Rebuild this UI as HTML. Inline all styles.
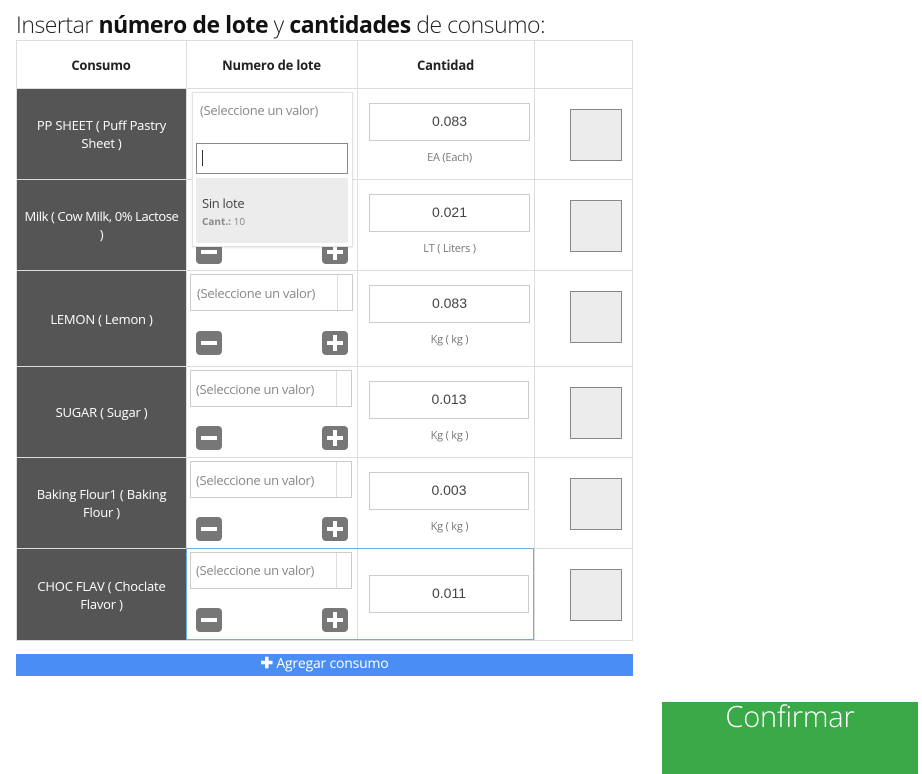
<!DOCTYPE html><html><head><meta charset="utf-8"><style>
*{box-sizing:border-box;margin:0;padding:0}
body{width:922px;height:774px;background:#fff;font-family:"Open Sans","Liberation Sans",sans-serif;position:relative;overflow:hidden;color:#333}
.a{position:absolute}
h1{position:absolute;left:16px;top:8px;font-size:23px;font-weight:300;color:#222;letter-spacing:-0.45px}
h1 b{font-weight:700;color:#111}
.hl{background:#ddd}
.th{font-size:13px;font-weight:700;color:#222;text-align:center;letter-spacing:-0.2px}
.name{background:#555;color:#fff;font-size:13px;text-align:center;display:flex;align-items:center;justify-content:center;padding:0 5px;line-height:18px;letter-spacing:-0.2px}
.sel{border:1px solid #ccc;background:#fff;font-size:13px;color:#888;padding:10px 6px;letter-spacing:-0.3px}
.sel:after{content:"";position:absolute;right:14px;top:0;bottom:0;border-left:1px solid #ddd}
.q{border:1px solid #ccc;background:#fff;font-size:14px;color:#444;text-align:center;line-height:34px;font-family:"Liberation Sans",sans-serif}
.u{font-size:11px;color:#777;text-align:center;width:161px;letter-spacing:-0.2px}
.cb{width:52px;height:52px;border:1px solid #888;background:#ececec}
.btn{width:26px;height:24px;background:#777;border-radius:4px}
.btn:before{content:"";position:absolute;left:5px;top:10px;width:16px;height:4px;background:#fff}
.pl:after{content:"";position:absolute;left:11px;top:4px;width:4px;height:16px;background:#fff}
</style></head><body>
<h1>Insertar <b>número de lote</b> y <b>cantidades</b> de consumo:</h1>
<div class="a" style="left:16px;top:40px;width:617px;height:601px;border:1px solid #ddd"></div>
<div class="a hl" style="left:186px;top:40px;width:1px;height:600px"></div>
<div class="a hl" style="left:357px;top:40px;width:1px;height:600px"></div>
<div class="a hl" style="left:534px;top:40px;width:1px;height:600px"></div>
<div class="a hl" style="left:16px;top:88px;width:617px;height:1px"></div>
<div class="a hl" style="left:16px;top:179px;width:617px;height:1px"></div>
<div class="a hl" style="left:16px;top:270px;width:617px;height:1px"></div>
<div class="a hl" style="left:16px;top:366px;width:617px;height:1px"></div>
<div class="a hl" style="left:16px;top:457px;width:617px;height:1px"></div>
<div class="a hl" style="left:16px;top:548px;width:617px;height:1px"></div>
<div class="a th" style="left:16px;top:56px;width:170px">Consumo</div>
<div class="a th" style="left:186px;top:56px;width:171px">Numero de lote</div>
<div class="a th" style="left:357px;top:56px;width:177px">Cantidad</div>

<div class="a name" style="left:17px;top:89px;width:169px;height:90px">PP SHEET ( Puff Pastry Sheet )</div>
<div class="a name" style="left:17px;top:180px;width:169px;height:90px;padding:0 1px;letter-spacing:-0.4px">Milk ( Cow Milk, 0% Lactose<br>)</div>
<div class="a name" style="left:17px;top:271px;width:169px;height:95px">LEMON ( Lemon )</div>
<div class="a name" style="left:17px;top:367px;width:169px;height:90px">SUGAR ( Sugar )</div>
<div class="a name" style="left:17px;top:458px;width:169px;height:90px">Baking Flour1 ( Baking Flour )</div>
<div class="a name" style="left:17px;top:549px;width:169px;height:91px">CHOC FLAV ( Choclate Flavor )</div>

<div class="a btn" style="left:196px;top:240px"></div>
<div class="a btn pl" style="left:322px;top:240px"></div>
<div class="a sel" style="left:190px;top:274px;width:163px;height:37px;padding-top:9px">(Seleccione un valor)</div>
<div class="a btn" style="left:196px;top:331px"></div>
<div class="a btn pl" style="left:322px;top:331px"></div>
<div class="a sel" style="left:190px;top:370px;width:162px;height:37px;padding:9px 5px">(Seleccione un valor)</div>
<div class="a btn" style="left:196px;top:426px"></div>
<div class="a btn pl" style="left:322px;top:426px"></div>
<div class="a sel" style="left:190px;top:461px;width:162px;height:37px;padding:9px 5px">(Seleccione un valor)</div>
<div class="a btn" style="left:196px;top:517px"></div>
<div class="a btn pl" style="left:322px;top:517px"></div>
<div class="a" style="left:186px;top:548px;width:348px;height:92px;border:1px solid #6ab0e8"></div>
<div class="a sel" style="left:190px;top:552px;width:162px;height:37px;padding:8px 5px">(Seleccione un valor)</div>
<div class="a btn" style="left:196px;top:608px"></div>
<div class="a btn pl" style="left:322px;top:608px"></div>

<div class="a q" style="left:369px;top:103px;width:161px;height:38px">0.083</div>
<div class="a u" style="left:369px;top:150px">EA (Each)</div>
<div class="a q" style="left:369px;top:194px;width:161px;height:38px">0.021</div>
<div class="a u" style="left:369px;top:241px">LT ( Liters )</div>
<div class="a q" style="left:369px;top:285px;width:161px;height:38px">0.083</div>
<div class="a u" style="left:369px;top:332px">Kg ( kg )</div>
<div class="a q" style="left:369px;top:381px;width:160px;height:38px">0.013</div>
<div class="a u" style="left:369px;top:428px">Kg ( kg )</div>
<div class="a q" style="left:369px;top:472px;width:160px;height:38px">0.003</div>
<div class="a u" style="left:369px;top:519px">Kg ( kg )</div>
<div class="a q" style="left:369px;top:575px;width:160px;height:38px">0.011</div>

<div class="a cb" style="left:570px;top:109px"></div>
<div class="a cb" style="left:570px;top:200px"></div>
<div class="a cb" style="left:570px;top:291px"></div>
<div class="a cb" style="left:570px;top:387px"></div>
<div class="a cb" style="left:570px;top:478px"></div>
<div class="a cb" style="left:570px;top:569px"></div>

<div class="a" style="left:192px;top:92px;width:161px;height:155px;border:1px solid #e2e2e2;background:#fff;box-shadow:0 1px 2px rgba(0,0,0,.1)"></div>
<div class="a" style="left:200px;top:101px;font-size:13px;color:#888;letter-spacing:-0.3px">(Seleccione un valor)</div>
<div class="a" style="left:196px;top:143px;width:152px;height:31px;border:1px solid #888;background:#fff"></div>
<div class="a" style="left:202px;top:150px;width:1px;height:16px;background:#333"></div>
<div class="a" style="left:196px;top:178px;width:152px;height:65px;background:#ececec"></div>
<div class="a" style="left:202px;top:194px;font-size:13px;color:#444;letter-spacing:-0.3px">Sin lote</div>
<div class="a" style="left:202px;top:214px;font-size:10px;color:#888"><b>Cant.:</b> 10</div>

<div class="a" style="left:16px;top:654px;width:617px;height:22px;background:#4a8ef5;color:#fff;font-size:14px;text-align:center;line-height:19px;letter-spacing:-0.2px"><b style="font-size:15px">✚</b> Agregar consumo</div>
<div class="a" style="left:662px;top:702px;width:256px;height:72px;background:#3aaa48;color:#fff;font-size:29px;font-weight:300;text-align:center;line-height:30px;letter-spacing:-0.2px">Confirmar</div>
</body></html>
